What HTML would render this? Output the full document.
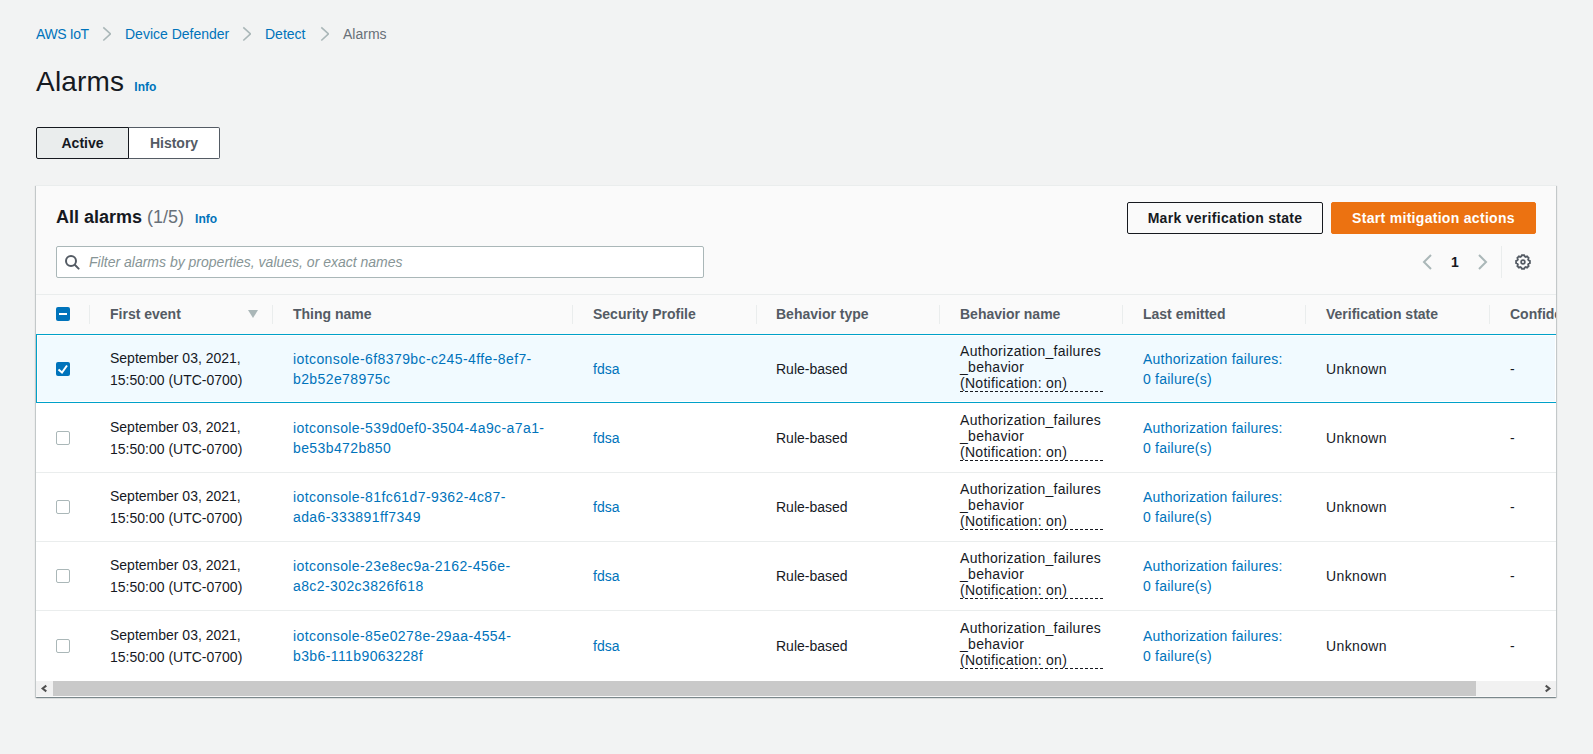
<!DOCTYPE html>
<html><head><meta charset="utf-8">
<style>
*{box-sizing:border-box;margin:0;padding:0}
html,body{width:1593px;height:754px;overflow:hidden;background:#f2f3f3;font-family:"Liberation Sans",sans-serif;color:#16191f;font-size:14px;line-height:20px}
.abs{position:absolute}
.lnk{color:#0073bb}
.bc{position:absolute;top:24px;height:20px;white-space:nowrap}
.chev{position:absolute}
h1{position:absolute;left:36px;top:64px;font-size:28px;line-height:36px;font-weight:normal;white-space:nowrap;letter-spacing:0.2px}
.info{font-weight:bold;font-size:12px;color:#0073bb;letter-spacing:0}
.seg{position:absolute;top:127px;height:32px;border:1px solid #16191f;font-weight:bold;text-align:center;line-height:30px}
.cont{position:absolute;left:36px;top:185px;width:1520px;height:512px;background:#fafafa;border-top:1px solid #eaeded;box-shadow:0 1px 1px 0 rgba(0,28,36,.3),1px 1px 1px 0 rgba(0,28,36,.15),-1px 1px 1px 0 rgba(0,28,36,.15)}
.btn{position:absolute;top:202px;height:32px;border-radius:2px;font-weight:bold;text-align:center;line-height:30px;white-space:nowrap;letter-spacing:0.3px}
.hd{position:absolute;top:304px;font-weight:bold;color:#545b64;white-space:nowrap}
.sep{position:absolute;top:305px;width:1px;height:19px;background:#eaeded}
.row{position:absolute;left:36px;width:1520px;height:69px;background:#fff;border-bottom:1px solid #eaeded}
.row.sel{background:#f1faff;border:1px solid #00a1c9;}
.cell{position:absolute;white-space:nowrap}
.cb{position:absolute;left:20px;width:14px;height:14px;border:1px solid #aab7b8;border-radius:2px;background:#fff}
.dash{border-bottom:1px dashed #16191f}
.tn{letter-spacing:0.4px}
.le{letter-spacing:0.22px}
.bn{line-height:16px;width:143px;height:49px;letter-spacing:0.29px;border-bottom:1px dashed #16191f}
</style></head><body>
<!-- breadcrumb -->
<div class="bc lnk" style="left:36px;letter-spacing:-0.4px">AWS IoT</div>
<svg class="chev" style="left:101px;top:26px" width="10" height="16" viewBox="0 0 10 16"><path d="M2.3 1.4L9.5 7.9 2.3 14.5" fill="none" stroke="#aab7b8" stroke-width="1.6"/></svg>
<div class="bc lnk" style="left:125px">Device Defender</div>
<svg class="chev" style="left:241px;top:26px" width="10" height="16" viewBox="0 0 10 16"><path d="M2.3 1.4L9.5 7.9 2.3 14.5" fill="none" stroke="#aab7b8" stroke-width="1.6"/></svg>
<div class="bc lnk" style="left:265px">Detect</div>
<svg class="chev" style="left:319px;top:26px" width="10" height="16" viewBox="0 0 10 16"><path d="M2.3 1.4L9.5 7.9 2.3 14.5" fill="none" stroke="#aab7b8" stroke-width="1.6"/></svg>
<div class="bc" style="left:343px;color:#687078">Alarms</div>

<h1>Alarms <span class="info" style="margin-left:2px">Info</span></h1>

<div class="seg" style="left:36px;width:93px;background:#eaeded;border-radius:2px 0 0 2px">Active</div>
<div class="seg" style="left:128px;width:92px;background:#fff;color:#545b64;border-color:#545b64 #545b64 #545b64 #16191f;border-radius:0 2px 2px 0">History</div>

<div class="cont"></div>

<div class="abs" style="left:56px;top:204px;font-size:18px;line-height:26px;font-weight:bold;white-space:nowrap">All alarms <span style="font-weight:normal;color:#687078">(1/5)</span> <span class="info" style="margin-left:6px">Info</span></div>

<div class="btn" style="left:1127px;width:196px;border:1px solid #16191f;background:#fafafa">Mark verification state</div>
<div class="btn" style="left:1331px;width:205px;border:1px solid #ec7211;background:#ec7211;color:#fff">Start mitigation actions</div>

<!-- filter -->
<div class="abs" style="left:56px;top:246px;width:648px;height:32px;border:1px solid #aab7b8;border-radius:2px;background:#fff"></div>
<svg class="abs" style="left:64px;top:254px" width="16" height="16" viewBox="0 0 16 16"><circle cx="7" cy="7" r="5" fill="none" stroke="#545b64" stroke-width="2"/><path d="M11 11l3.6 3.6" stroke="#545b64" stroke-width="2" stroke-linecap="round"/></svg>
<div class="abs" style="left:89px;top:252px;font-style:italic;color:#879596;white-space:nowrap">Filter alarms by properties, values, or exact names</div>

<!-- pagination -->
<svg class="abs" style="left:1421px;top:254px" width="12" height="16" viewBox="0 0 12 16"><path d="M10 1L3 8l7 7" fill="none" stroke="#aab7b8" stroke-width="2"/></svg>
<div class="abs" style="left:1451px;top:252px;font-weight:bold">1</div>
<svg class="abs" style="left:1477px;top:254px" width="12" height="16" viewBox="0 0 12 16"><path d="M2 1l7 7-7 7" fill="none" stroke="#aab7b8" stroke-width="2"/></svg>
<div class="abs" style="left:1501px;top:246px;width:1px;height:32px;background:#eaeded"></div>
<svg class="abs" style="left:1515px;top:254px" width="16" height="16" viewBox="0 0 16 16"><circle cx="8" cy="8" r="1.9" fill="none" stroke="#545b64" stroke-width="1.7"/><path d="M6.40 2.42 L6.90 1.09 L9.10 1.09 L9.60 2.42 L10.81 2.93 L12.11 2.34 L13.66 3.89 L13.07 5.19 L13.58 6.40 L14.91 6.90 L14.91 9.10 L13.58 9.60 L13.07 10.81 L13.66 12.11 L12.11 13.66 L10.81 13.07 L9.60 13.58 L9.10 14.91 L6.90 14.91 L6.40 13.58 L5.19 13.07 L3.89 13.66 L2.34 12.11 L2.93 10.81 L2.42 9.60 L1.09 9.10 L1.09 6.90 L2.42 6.40 L2.93 5.19 L2.34 3.89 L3.89 2.34 L5.19 2.93Z" fill="none" stroke="#545b64" stroke-width="1.8" stroke-linejoin="miter"/></svg>

<!-- table header -->
<div class="abs" style="left:36px;top:294px;width:1520px;height:1px;background:#eaeded"></div>
<div class="abs" style="left:56px;top:307px;width:14px;height:14px;background:#0073bb;border-radius:2px"><div style="position:absolute;left:3px;top:6px;width:8px;height:2px;background:#fff"></div></div>
<div class="sep" style="left:89px"></div>
<div class="hd" style="left:110px">First event</div>
<svg class="abs" style="left:248px;top:310px" width="10" height="8" viewBox="0 0 10 8"><path d="M0 0h10L5 8z" fill="#aab7b8"/></svg>
<div class="sep" style="left:272px"></div>
<div class="hd" style="left:293px">Thing name</div>
<div class="sep" style="left:572px"></div>
<div class="hd" style="left:593px">Security Profile</div>
<div class="sep" style="left:756px"></div>
<div class="hd" style="left:776px">Behavior type</div>
<div class="sep" style="left:939px"></div>
<div class="hd" style="left:960px">Behavior name</div>
<div class="sep" style="left:1122px"></div>
<div class="hd" style="left:1143px">Last emitted</div>
<div class="sep" style="left:1305px"></div>
<div class="hd" style="left:1326px">Verification state</div>
<div class="sep" style="left:1489px"></div>
<div class="hd" style="left:1510px;width:46px;overflow:hidden">Confidence</div>

<div id="rows">
<div class="abs" style="left:36px;top:334px;width:1520px;height:69px;background:#f1faff;border:1px solid #00a1c9;border-right:none;box-shadow:inset 0 0 0 1px #fff"></div>
<svg class="abs" style="left:56px;top:362px" width="14" height="14" viewBox="0 0 14 14"><rect x="0" y="0" width="14" height="14" rx="2" fill="#0073bb"/><path d="M2.5 7.5l3.5 3 5-7" fill="none" stroke="#fff" stroke-width="2"/></svg>
<div class="cell" style="left:110px;top:347px;line-height:22px">September 03, 2021,<br>15:50:00 (UTC-0700)</div>
<div class="cell lnk tn" style="left:293px;top:349px">iotconsole-6f8379bc-c245-4ffe-8ef7-<br>b2b52e78975c</div>
<div class="cell lnk" style="left:593px;top:359px">fdsa</div>
<div class="cell" style="left:776px;top:359px">Rule-based</div>
<div class="cell bn" style="left:960px;top:343px">Authorization_failures<br>_behavior<br>(Notification: on)</div>
<div class="cell lnk le" style="left:1143px;top:349px">Authorization failures:<br>0 failure(s)</div>
<div class="cell" style="letter-spacing:0.37px;left:1326px;top:359px">Unknown</div>
<div class="cell" style="left:1510px;top:359px">-</div>
<div class="abs" style="left:36px;top:403px;width:1520px;height:70px;background:#fff;border-bottom:1px solid #eaeded;"></div>
<div class="cb" style="left:56px;top:431px"></div>
<div class="cell" style="left:110px;top:416px;line-height:22px">September 03, 2021,<br>15:50:00 (UTC-0700)</div>
<div class="cell lnk tn" style="left:293px;top:418px">iotconsole-539d0ef0-3504-4a9c-a7a1-<br>be53b472b850</div>
<div class="cell lnk" style="left:593px;top:428px">fdsa</div>
<div class="cell" style="left:776px;top:428px">Rule-based</div>
<div class="cell bn" style="left:960px;top:412px">Authorization_failures<br>_behavior<br>(Notification: on)</div>
<div class="cell lnk le" style="left:1143px;top:418px">Authorization failures:<br>0 failure(s)</div>
<div class="cell" style="letter-spacing:0.37px;left:1326px;top:428px">Unknown</div>
<div class="cell" style="left:1510px;top:428px">-</div>
<div class="abs" style="left:36px;top:473px;width:1520px;height:69px;background:#fff;border-bottom:1px solid #eaeded;"></div>
<div class="cb" style="left:56px;top:500px"></div>
<div class="cell" style="left:110px;top:485px;line-height:22px">September 03, 2021,<br>15:50:00 (UTC-0700)</div>
<div class="cell lnk tn" style="left:293px;top:487px">iotconsole-81fc61d7-9362-4c87-<br>ada6-333891ff7349</div>
<div class="cell lnk" style="left:593px;top:497px">fdsa</div>
<div class="cell" style="left:776px;top:497px">Rule-based</div>
<div class="cell bn" style="left:960px;top:481px">Authorization_failures<br>_behavior<br>(Notification: on)</div>
<div class="cell lnk le" style="left:1143px;top:487px">Authorization failures:<br>0 failure(s)</div>
<div class="cell" style="letter-spacing:0.37px;left:1326px;top:497px">Unknown</div>
<div class="cell" style="left:1510px;top:497px">-</div>
<div class="abs" style="left:36px;top:542px;width:1520px;height:69px;background:#fff;border-bottom:1px solid #eaeded;"></div>
<div class="cb" style="left:56px;top:569px"></div>
<div class="cell" style="left:110px;top:554px;line-height:22px">September 03, 2021,<br>15:50:00 (UTC-0700)</div>
<div class="cell lnk tn" style="left:293px;top:556px">iotconsole-23e8ec9a-2162-456e-<br>a8c2-302c3826f618</div>
<div class="cell lnk" style="left:593px;top:566px">fdsa</div>
<div class="cell" style="left:776px;top:566px">Rule-based</div>
<div class="cell bn" style="left:960px;top:550px">Authorization_failures<br>_behavior<br>(Notification: on)</div>
<div class="cell lnk le" style="left:1143px;top:556px">Authorization failures:<br>0 failure(s)</div>
<div class="cell" style="letter-spacing:0.37px;left:1326px;top:566px">Unknown</div>
<div class="cell" style="left:1510px;top:566px">-</div>
<div class="abs" style="left:36px;top:611px;width:1520px;height:70px;background:#fff;"></div>
<div class="cb" style="left:56px;top:639px"></div>
<div class="cell" style="left:110px;top:624px;line-height:22px">September 03, 2021,<br>15:50:00 (UTC-0700)</div>
<div class="cell lnk tn" style="left:293px;top:626px">iotconsole-85e0278e-29aa-4554-<br>b3b6-111b9063228f</div>
<div class="cell lnk" style="left:593px;top:636px">fdsa</div>
<div class="cell" style="left:776px;top:636px">Rule-based</div>
<div class="cell bn" style="left:960px;top:620px">Authorization_failures<br>_behavior<br>(Notification: on)</div>
<div class="cell lnk le" style="left:1143px;top:626px">Authorization failures:<br>0 failure(s)</div>
<div class="cell" style="letter-spacing:0.37px;left:1326px;top:636px">Unknown</div>
<div class="cell" style="left:1510px;top:636px">-</div>
</div><!--/rows-->

<!-- scrollbar -->
<div class="abs" style="left:36px;top:681px;width:1520px;height:15px;background:#f1f1f1"></div>
<div class="abs" style="left:53px;top:681px;width:1423px;height:15px;background:#c9c9c9"></div>
<svg class="abs" style="left:40px;top:684px" width="8" height="9" viewBox="0 0 8 9"><path d="M6.3 1.6L2.6 4.5 6.3 7.4" fill="none" stroke="#505050" stroke-width="2"/></svg>
<svg class="abs" style="left:1544px;top:684px" width="8" height="9" viewBox="0 0 8 9"><path d="M1.7 1.6L5.4 4.5 1.7 7.4" fill="none" stroke="#505050" stroke-width="2"/></svg>
</body></html>
